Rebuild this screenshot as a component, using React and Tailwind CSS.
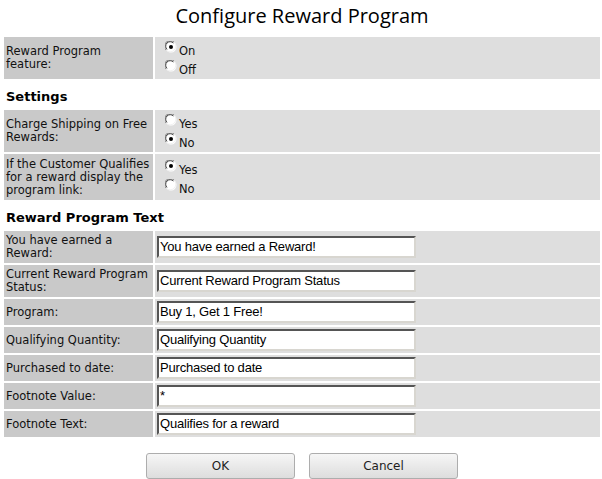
import React from 'react';

// classic windows-style radio
function Radio({ checked }) {
    return (
        <svg width="12" height="12" viewBox="0 0 12 12" className="shrink-0">
            <circle cx="6" cy="6" r="5.5" fill="#ffffff" />
            <path d="M1.2 9.2 A5.5 5.5 0 0 1 9.2 1.2" fill="none" stroke="#808080" strokeWidth="1" />
            <path d="M2 8.4 A4.5 4.5 0 0 1 8.4 2" fill="none" stroke="#404040" strokeWidth="1" />
            <path d="M9.2 1.2 A5.5 5.5 0 0 1 1.2 9.2" fill="none" stroke="#f0f0f0" strokeWidth="1" />
            {checked && <circle cx="6" cy="6" r="2" fill="#000000" />}
        </svg>
    );
}

function RadioOption({ label, checked }) {
    return (
        <div className="flex items-start h-[19px]">
            <div className="mt-[1px]"><Radio checked={checked} /></div>
            <span className="ml-[2px] mt-[5px] leading-[13px]">{label}</span>
        </div>
    );
}

function Label({ children, height }) {
    return (
        <div className={`bg-[#c9c9c9] flex items-center px-[2px] leading-[13px] whitespace-nowrap ${height}`}>
            <span>{children}</span>
        </div>
    );
}

function RadioRow({ label, options, height }) {
    return (
        <>
            <Label height={height}>{label}</Label>
            <div className="bg-[#dedede] flex flex-col justify-center pl-[10px] pt-[1px]">
                {options.map((o) => <RadioOption key={o.label} label={o.label} checked={o.checked} />)}
            </div>
        </>
    );
}

function TextRow({ label, value, height = 'h-[26px]' }) {
    return (
        <>
            <Label height={height}>{label}</Label>
            <div className="bg-[#dedede] flex items-center pl-[2px]">
                <div className="w-[259px] h-[22px] bg-white border-2 border-t-[#555555] border-l-[#555555] border-b-[#d8d6d0] border-r-[#d8d6d0] flex items-center pl-[1px] text-[13px] text-black tracking-[-0.2px]" style={{ fontFamily: '"Liberation Sans", Arial, sans-serif' }}>
                    {value}
                </div>
            </div>
        </>
    );
}

function Button({ children }) {
    return (
        <button className="w-[149px] h-[26px] rounded-[3px] border border-[#adadad] bg-gradient-to-b from-[#f6f6f6] to-[#dddddd] text-[12px] text-[#1e1e1e]">
            {children}
        </button>
    );
}

export default function App() {
    return (
        <div className="w-[602px] h-[479px] bg-white text-[11.5px] text-[#111111] overflow-hidden" style={{ fontFamily: '"DejaVu Sans", Verdana, sans-serif' }}>
            <h1 className="h-[37px] pt-[3px] pl-[2px] text-center text-[20px] text-black leading-[26px]" style={{ fontFamily: '"Open Sans", "Noto Sans", sans-serif' }}>
                Configure Reward Program
            </h1>

            <div className="pl-[4px] pr-[2px]">
                <div className="grid grid-cols-[149px_1fr] gap-x-[2px]">
                    <RadioRow label={<>Reward Program<br />feature:</>} height="h-[42px]" options={[{ label: 'On', checked: true }, { label: 'Off', checked: false }]} />
                </div>

                <h2 className="h-[31px] flex items-center pl-[2px] pt-[5px] text-[13px] font-bold text-black">Settings</h2>

                <div className="grid grid-cols-[149px_1fr] gap-[2px]">
                    <RadioRow label={<>Charge Shipping on Free<br />Rewards:</>} height="h-[42px]" options={[{ label: 'Yes', checked: false }, { label: 'No', checked: true }]} />
                    <RadioRow label={<>If the Customer Qualifies<br />for a reward display the<br />program link:</>} height="h-[46px]" options={[{ label: 'Yes', checked: true }, { label: 'No', checked: false }]} />
                </div>

                <h2 className="h-[31px] flex items-center pl-[2px] pt-[5px] text-[13px] font-bold text-black">Reward Program Text</h2>

                <div className="grid grid-cols-[149px_1fr] gap-[2px]">
                    <TextRow label={<>You have earned a<br />Reward:</>} value="You have earned a Reward!" height="h-[32px]" />
                    <TextRow label={<>Current Reward Program<br />Status:</>} value="Current Reward Program Status" height="h-[32px]" />
                    <TextRow label="Program:" value="Buy 1, Get 1 Free!" />
                    <TextRow label="Qualifying Quantity:" value="Qualifying Quantity" />
                    <TextRow label="Purchased to date:" value="Purchased to date" />
                    <TextRow label="Footnote Value:" value="*" />
                    <TextRow label="Footnote Text:" value="Qualifies for a reward" />
                </div>

                <div className="flex justify-center gap-[14px] pt-[16px]">
                    <Button>OK</Button>
                    <Button>Cancel</Button>
                </div>
            </div>
        </div>
    );
}
